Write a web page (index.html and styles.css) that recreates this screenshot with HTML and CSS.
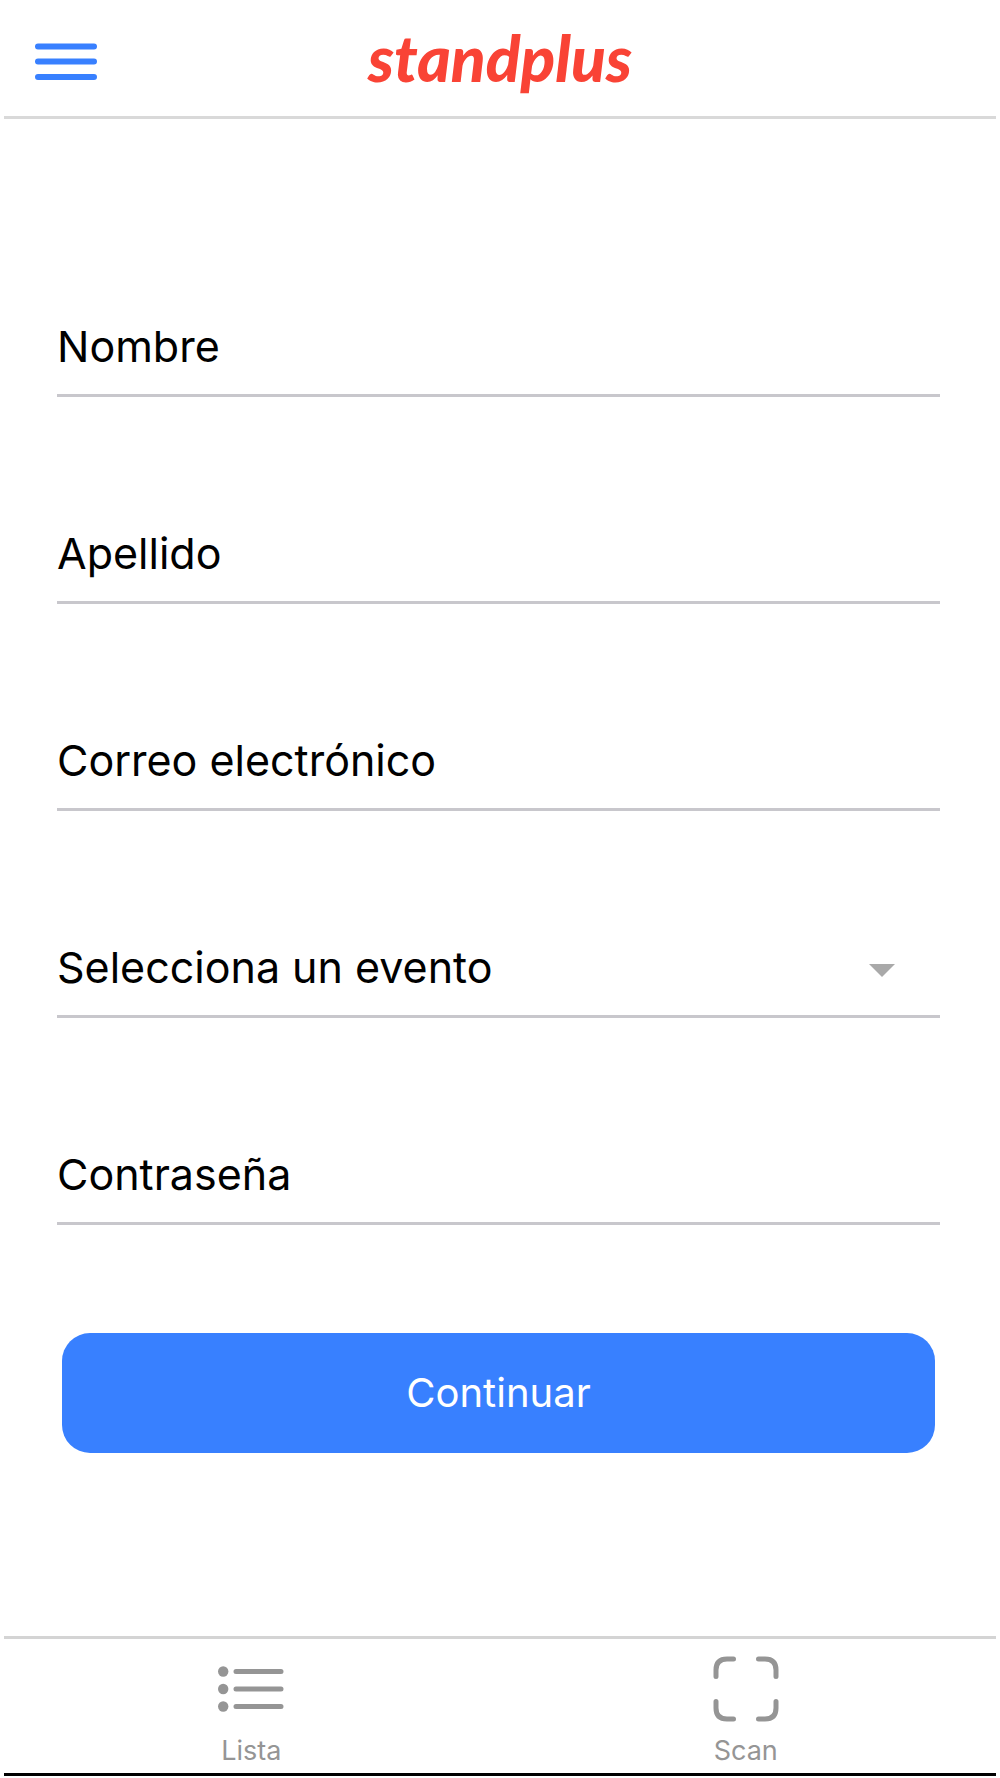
FILE: index.html
```html
<!DOCTYPE html>
<html lang="es">
<head>
<meta charset="utf-8">
<meta name="viewport" content="width=device-width, initial-scale=1">
<title>standplus</title>
<link rel="stylesheet" href="styles.css">
</head>
<body>
<header class="topbar">
  <button class="menu" type="button" aria-label="Menú">
    <svg width="64" height="42" viewBox="0 0 64 42" fill="none" stroke="currentColor" stroke-width="6" stroke-linecap="round"><path d="M4 5.500H60M4 20.500H60M4 36H60"/></svg>
  </button>
  <h1 class="logo">standplus</h1>
</header>
<main class="content">
  <form class="form">
    <input class="field" type="text" placeholder="Nombre" aria-label="Nombre">
    <input class="field" type="text" placeholder="Apellido" aria-label="Apellido">
    <input class="field" type="email" placeholder="Correo electrónico" aria-label="Correo electrónico">
    <div class="picker">
      <select class="field" aria-label="Selecciona un evento">
        <option>Selecciona un evento</option>
      </select>
      <svg class="arrow" width="26" height="13" viewBox="0 0 26 13"><path fill="#a9a9a9" d="M0 0H26L13 13Z"/></svg>
    </div>
    <input class="field" type="password" placeholder="Contraseña" aria-label="Contraseña">
    <button class="submit" type="submit">Continuar</button>
  </form>
</main>
<nav class="tabs">
  <a class="tab" href="#lista">
    <svg width="66" height="66" viewBox="0 0 66 66" fill="none" stroke="currentColor" stroke-width="5" stroke-linecap="round"><path d="M18 15.500H63M18 33H63M18 50.500H63"/><g fill="currentColor" stroke="none"><circle cx="5.200" cy="15.500" r="5.200"/><circle cx="5.200" cy="33" r="5.200"/><circle cx="5.200" cy="50.500" r="5.200"/></g></svg>
    <span>Lista</span>
  </a>
  <a class="tab" href="#scan">
    <svg width="66" height="66" viewBox="0 0 66 66" fill="none" stroke="currentColor" stroke-width="5" stroke-linecap="round"><path d="M3 20.500V14Q3 3 14 3H20.500M45.500 3H52Q63 3 63 14V20.500M63 45.500V52Q63 63 52 63H45.500M20.500 63H14Q3 63 3 52V45.500"/></svg>
    <span>Scan</span>
  </a>
</nav>
</body>
</html>
```
FILE: styles.css
```css
* {
  box-sizing: border-box;
}

body {
  display: flex;
  flex-direction: column;
  min-height: 100vh;
  margin: 0;
  padding: 0 4px 2px;
  background: #fff;
  color: #000;
  font-family: Inter, "Liberation Sans", sans-serif;
}

.topbar {
  display: grid;
  grid-template-columns: 1fr auto 1fr;
  align-items: center;
  height: 119px;
  padding: 0 30px;
  border-bottom: 3px solid #d9d9d9;
}

.menu {
  justify-self: start;
  display: flex;
  margin: 8px 0 0;
  padding: 0;
  border: 0;
  background: none;
  color: #3880ff;
}

.logo {
  margin: 0;
  color: #f94335;
  font: italic 900 64px/80px Lato, sans-serif;
}

.content {
  flex: 1;
  padding: 179px 56px 0 53px;
}

.form {
  display: flex;
  flex-direction: column;
  gap: 108px;
}

.field {
  display: block;
  width: 100%;
  height: 99px;
  padding: 20px 0;
  border: 0;
  border-bottom: 3px solid #c8c7cc;
  border-radius: 0;
  background: transparent;
  color: #000;
  font: 400 43px/56px Inter, "Liberation Sans", sans-serif;
  appearance: none;
}

.field::placeholder {
  color: #000;
  opacity: 1;
}

.picker {
  display: grid;
  align-items: center;
}

.picker > * {
  grid-area: 1 / 1;
}

.arrow {
  justify-self: end;
  margin: 4px 45px 0 0;
  pointer-events: none;
}

.submit {
  height: 120px;
  margin: 0 5px;
  border: 0;
  border-radius: 28px;
  background: #3880ff;
  color: #fff;
  font: 400 40px/56px Inter, "Liberation Sans", sans-serif;
}

.tabs {
  display: grid;
  grid-template-columns: 1fr 1fr;
  padding: 17px 3px 6px 0;
  border-top: 3px solid #d4d4d4;
  border-bottom: 3px solid #000;
}

.tab {
  display: flex;
  flex-direction: column;
  align-items: center;
  gap: 13px;
  color: #959595;
  font-size: 27px;
  line-height: 32px;
  text-decoration: none;
}
```
